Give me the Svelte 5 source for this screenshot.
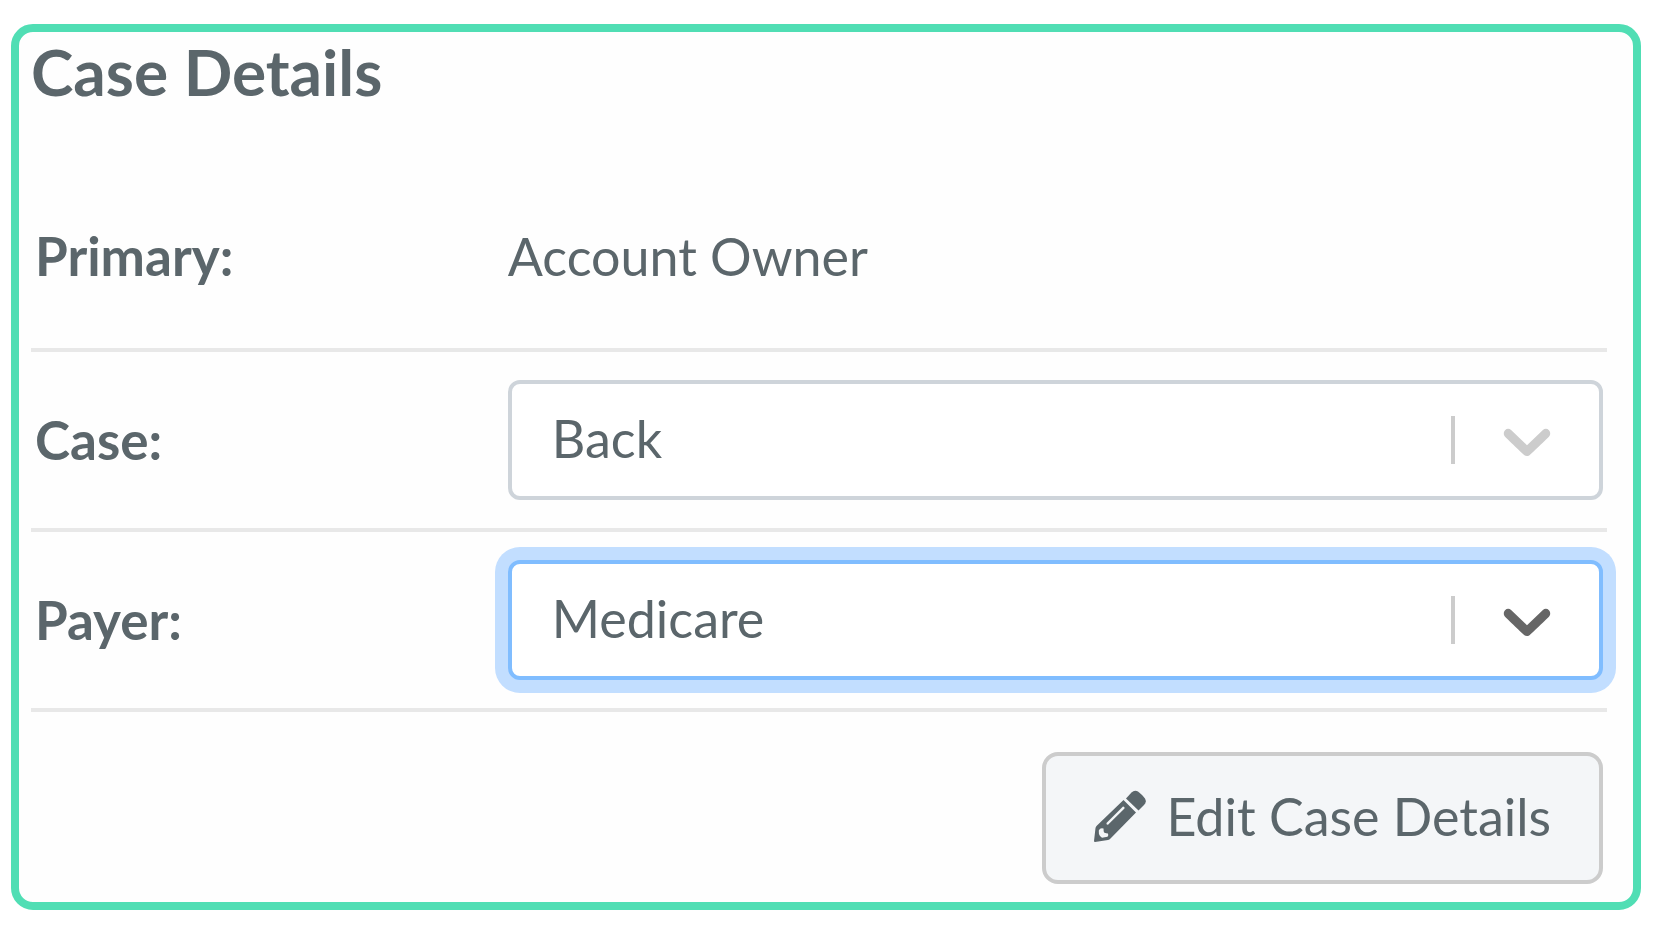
<script lang="ts">
  interface Field {
    id: string;
    label: string;
    options: string[];
    value: string;
  }

  let active = $state("payer");
  let fields: Field[] = $state([
    { id: "case", label: "Case:", options: ["Back", "Knee", "Shoulder"], value: "Back" },
    { id: "payer", label: "Payer:", options: ["Medicare", "Self Pay"], value: "Medicare" },
  ]);
</script>

<section class="panel">
  <h1 class="title">Case Details</h1>

  <form class="details">
    <div class="row plain">
      <span class="label">Primary:</span>
      <span>Account Owner</span>
    </div>

    {#each fields as field (field.id)}
      <div class="row">
        <label class="label" for={field.id}>{field.label}</label>
        <div class="control" class:active={active === field.id}>
          <select id={field.id} bind:value={field.value} onfocus={() => (active = field.id)}>
            {#each field.options as option}
              <option>{option}</option>
            {/each}
          </select>
          <div class="indicator">
            <span class="separator"></span>
            <svg viewBox="0 0 20 20" aria-hidden="true">
              <path d="M4.516 7.548c0.436-0.446 1.043-0.481 1.576 0l3.908 3.747 3.908-3.747c0.533-0.481 1.141-0.446 1.574 0 0.436 0.445 0.408 1.197 0 1.615-0.406 0.418-4.695 4.502-4.695 4.502-0.217 0.223-0.502 0.335-0.787 0.335s-0.57-0.112-0.789-0.335c0 0-4.287-4.084-4.695-4.502s-0.436-1.17 0-1.615z" />
            </svg>
          </div>
        </div>
      </div>
    {/each}

    <div class="actions">
      <button type="button" class="edit">
        <svg viewBox="0 0 52 52" aria-hidden="true">
          <path d="M32 8.500L37.500 2.500Q40.500 -0.500 44 1.500Q48 4.500 51 8.500Q53 12 50 15L44.500 20.500Z" />
          <path fill-rule="evenodd" d="M29.500 10L42 22.500L16.500 48.500Q15.500 49.500 14 50L1 52Q0 52 0 51L1.500 38Q1.700 36.500 3 35.500ZM29 16.500L12.500 33Q12 35 14 34.800L30.500 18.500Q31 16.500 29 16.500ZM4.800 40.500Q4.500 44 6 46L8 47.800L13.500 46.800Q14.800 45.500 14 43.500Q12.500 43.500 10 42.500Q9.500 40.500 9.500 38.500Q6 37.500 4.800 40.500Z" />
        </svg>
        <span>Edit Case Details</span>
      </button>
    </div>
  </form>
</section>

<style>
  :global(body) {
    background: #fff;
  }

  .panel {
    margin: 24px 15px 18px 11px;
    padding: 0 26px 18px 12px;
    border: 8px solid #50deb4;
    border-radius: 22px;
    background: #fefefe;
    color: #5b666b;
    font-family: Lato, sans-serif;
    font-size: 52px;
    line-height: 64px;
  }

  .title {
    margin: 0 0 52px;
    font-size: 64px;
    font-weight: 700;
    line-height: 80px;
  }

  .row {
    display: grid;
    grid-template-columns: 30% 70%;
    align-items: center;
    border-bottom: 4px solid #e8e8e8;
  }

  .row > * {
    margin: 28px 4px;
  }

  .plain > * {
    margin: 60px 4px;
  }

  .label {
    font-size: 53px;
    font-weight: 700;
  }

  .control {
    position: relative;
    border: 4px solid #ced4da;
    border-radius: 12px;
    background: #fff;
  }

  .active {
    border-color: #80bdff;
    box-shadow: 0 0 0 13px #c2deff;
  }

  select {
    display: block;
    width: 100%;
    height: 112px;
    padding: 0 160px 4px 40px;
    border: 0;
    outline: 0;
    background: none;
    color: inherit;
    font: inherit;
    appearance: none;
  }

  .indicator {
    position: absolute;
    top: 0;
    right: 32px;
    bottom: 0;
    display: flex;
    align-items: center;
    gap: 32px;
    pointer-events: none;
  }

  .separator {
    width: 4px;
    height: 48px;
    background: #ccc;
  }

  .indicator svg {
    width: 80px;
    height: 80px;
    fill: #ccc;
  }

  .active .indicator svg {
    fill: #666;
  }

  .actions {
    display: flex;
    justify-content: flex-end;
    padding: 40px 4px 0;
  }

  .edit {
    display: flex;
    align-items: center;
    gap: 20px;
    height: 132px;
    padding: 0 48px 4px;
    border: 4px solid #ccc;
    border-radius: 16px;
    background: #f4f6f8;
    color: inherit;
    font: inherit;
    cursor: pointer;
  }

  .edit:hover {
    background: #e9ecef;
  }

  .edit svg {
    width: 52px;
    height: 52px;
    fill: currentColor;
  }
</style>
